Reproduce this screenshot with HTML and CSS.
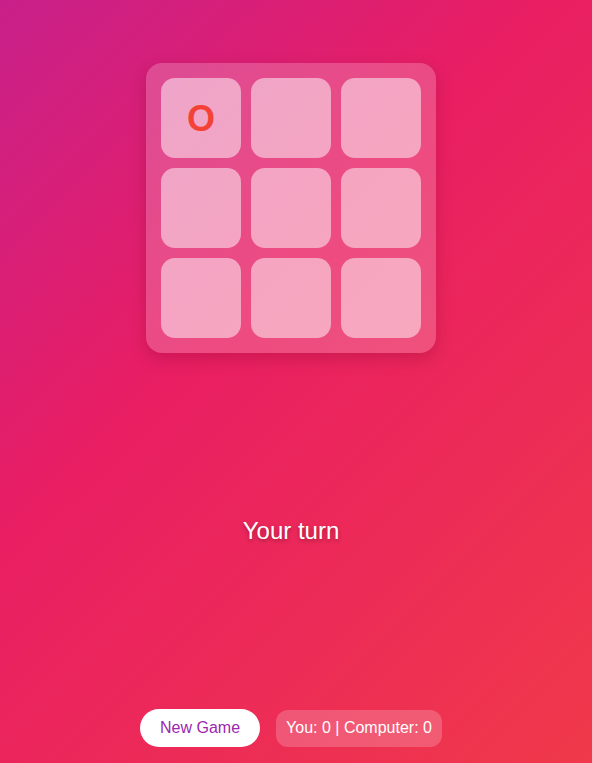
FILE: index.html
```html
<!DOCTYPE html>
<html>
<head>
<meta charset="utf-8">
<link rel="stylesheet" href="styles.css">
</head>
<body>
<div class="app">
  <div class="board">
    <div class="cell"><span class="mark-o">O</span></div>
    <div class="cell"></div>
    <div class="cell"></div>
    <div class="cell"></div>
    <div class="cell"></div>
    <div class="cell"></div>
    <div class="cell"></div>
    <div class="cell"></div>
    <div class="cell"></div>
  </div>
  <div class="status">Your turn</div>
  <div class="controls">
    <button class="new-game">New Game</button>
    <div class="score">You: 0 | Computer: 0</div>
  </div>
</div>
</body>
</html>
```
FILE: styles.css
```css
html, body {
  margin: 0;
  padding: 0;
  height: 100%;
}
body {
  background: linear-gradient(135deg, #c8208a 0%, #e91e63 40%, #f0394a 100%);
  font-family: "Liberation Sans", Arial, sans-serif;
  overflow: hidden;
}
.app {
  height: 100vh;
  box-sizing: border-box;
  padding: 63px 10px 16px 0;
  display: flex;
  flex-direction: column;
  align-items: center;
}
.board {
  display: grid;
  grid-template-columns: repeat(3, 80px);
  grid-template-rows: repeat(3, 80px);
  gap: 10px;
  padding: 15px;
  background: rgba(255, 255, 255, 0.2);
  border-radius: 16px;
  box-shadow: 0 6px 16px rgba(120, 0, 40, 0.25);
}
.cell {
  background: rgba(255, 255, 255, 0.5);
  border-radius: 14px;
  display: flex;
  align-items: center;
  justify-content: center;
}
.mark-o {
  color: #f44336;
  font-size: 36px;
  font-weight: bold;
  font-family: "Liberation Sans", Arial, sans-serif;
  padding-top: 2px;
}
.status {
  flex: 1;
  display: flex;
  align-items: center;
  justify-content: center;
  color: #fff;
  font-size: 24px;
  text-shadow: 0 2px 4px rgba(0, 0, 0, 0.3);
}
.controls {
  display: flex;
  gap: 16px;
  align-items: center;
}
.new-game {
  height: 38px;
  width: 120px;
  border: none;
  border-radius: 19px;
  background: #fff;
  color: #9c27b0;
  font-family: "Liberation Sans", Arial, sans-serif;
  font-size: 16px;
  padding: 0;
}
.score {
  height: 37px;
  box-sizing: border-box;
  padding: 0 10px;
  display: flex;
  align-items: center;
  border-radius: 12px;
  background: rgba(255, 255, 255, 0.2);
  color: #fff;
  font-size: 16px;
}
```
